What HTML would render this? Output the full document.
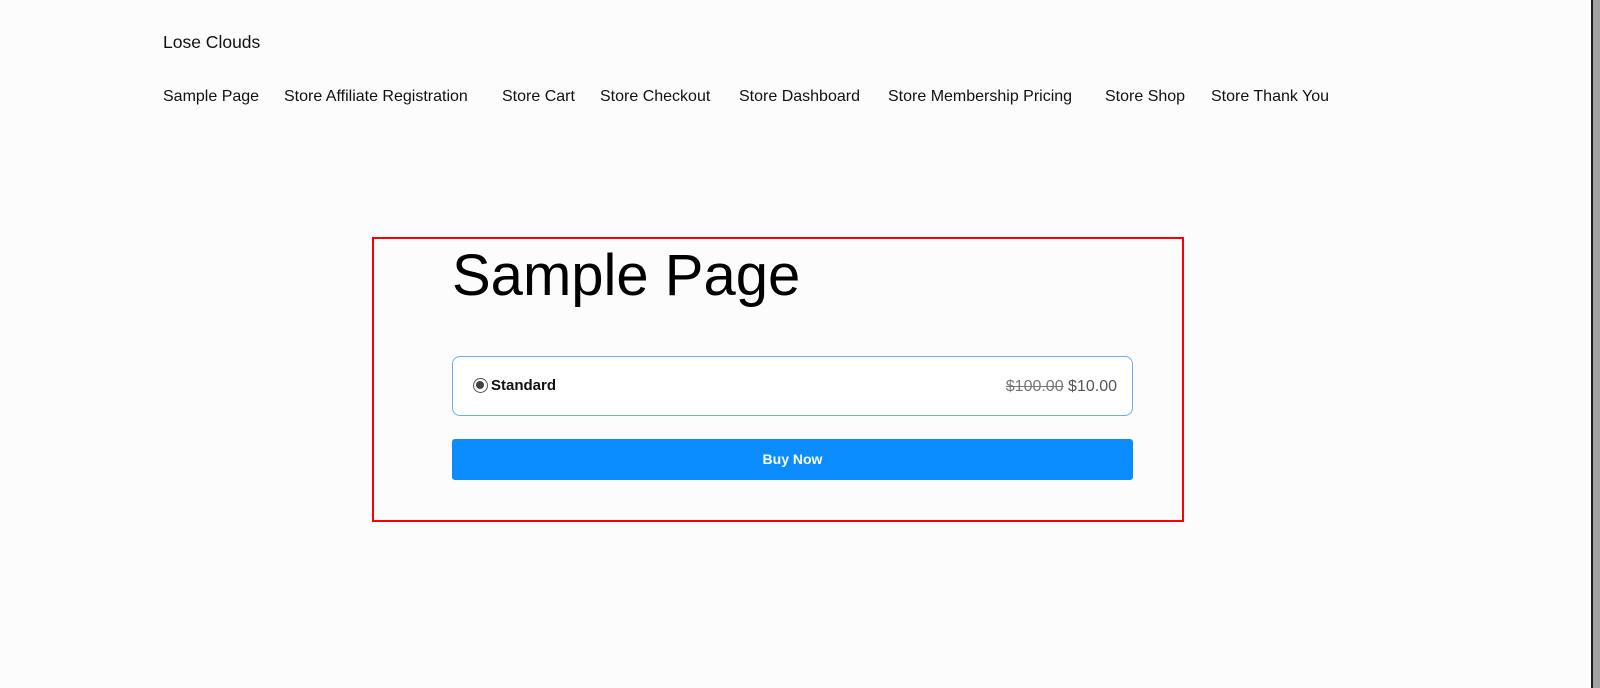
<!DOCTYPE html>
<html><head><meta charset="utf-8"><style>
html,body{margin:0;padding:0;width:1600px;height:688px;overflow:hidden;background:#fcfcfc;font-family:"Liberation Sans",sans-serif;color:#111;}
.sb{position:absolute;left:1591px;top:0;width:2px;height:688px;background:#1e1e1e}
.sb2{position:absolute;left:1593px;top:0;width:7px;height:688px;background:#a3a3a3}
.logo{position:absolute;left:163px;top:32px;font-size:17.5px}
.nav span{position:absolute;top:88px;font-size:16px;white-space:nowrap}
.frame{position:absolute;left:372px;top:237px;width:808px;height:281px;border:2px solid #f00;}
h1{position:absolute;left:452px;top:238px;margin:0;font-weight:400;font-size:58px;color:#000;line-height:76px}
.card{position:absolute;left:452px;top:356px;width:679px;height:58px;border:1px solid #6eaaf5;border-radius:8px;background:#fff}
.radio{position:absolute;left:20px;top:21px;border:1.5px solid #555;border-radius:50%;box-sizing:border-box;width:15px;height:15px}
.radio:after{content:"";position:absolute;left:2px;top:2px;width:8px;height:8px;border-radius:50%;background:#444}
.std{position:absolute;left:38px;top:20px;font-size:15px;font-weight:700;color:#111}
.price{position:absolute;right:15px;top:21px;font-size:16px;color:#555}
.price s{color:#777}
.btn{position:absolute;left:452px;top:439px;width:681px;height:41px;background:#0a8cff;border-radius:3px;color:#fff;font-size:14px;font-weight:700;text-align:center;line-height:41px}
</style></head><body>
<div class="sb"></div><div class="sb2"></div>
<div class="logo">Lose Clouds</div>
<div class="nav"><span style="left:163px">Sample Page</span><span style="left:284px">Store Affiliate Registration</span><span style="left:502px">Store Cart</span><span style="left:600px">Store Checkout</span><span style="left:739px">Store Dashboard</span><span style="left:888px">Store Membership Pricing</span><span style="left:1105px">Store Shop</span><span style="left:1211px">Store Thank You</span></div>
<div class="frame"></div>
<h1>Sample Page</h1>
<div class="card"><div class="radio"></div><div class="std">Standard</div><div class="price"><s>$100.00</s> $10.00</div></div>
<div class="btn">Buy Now</div>
</body></html>
